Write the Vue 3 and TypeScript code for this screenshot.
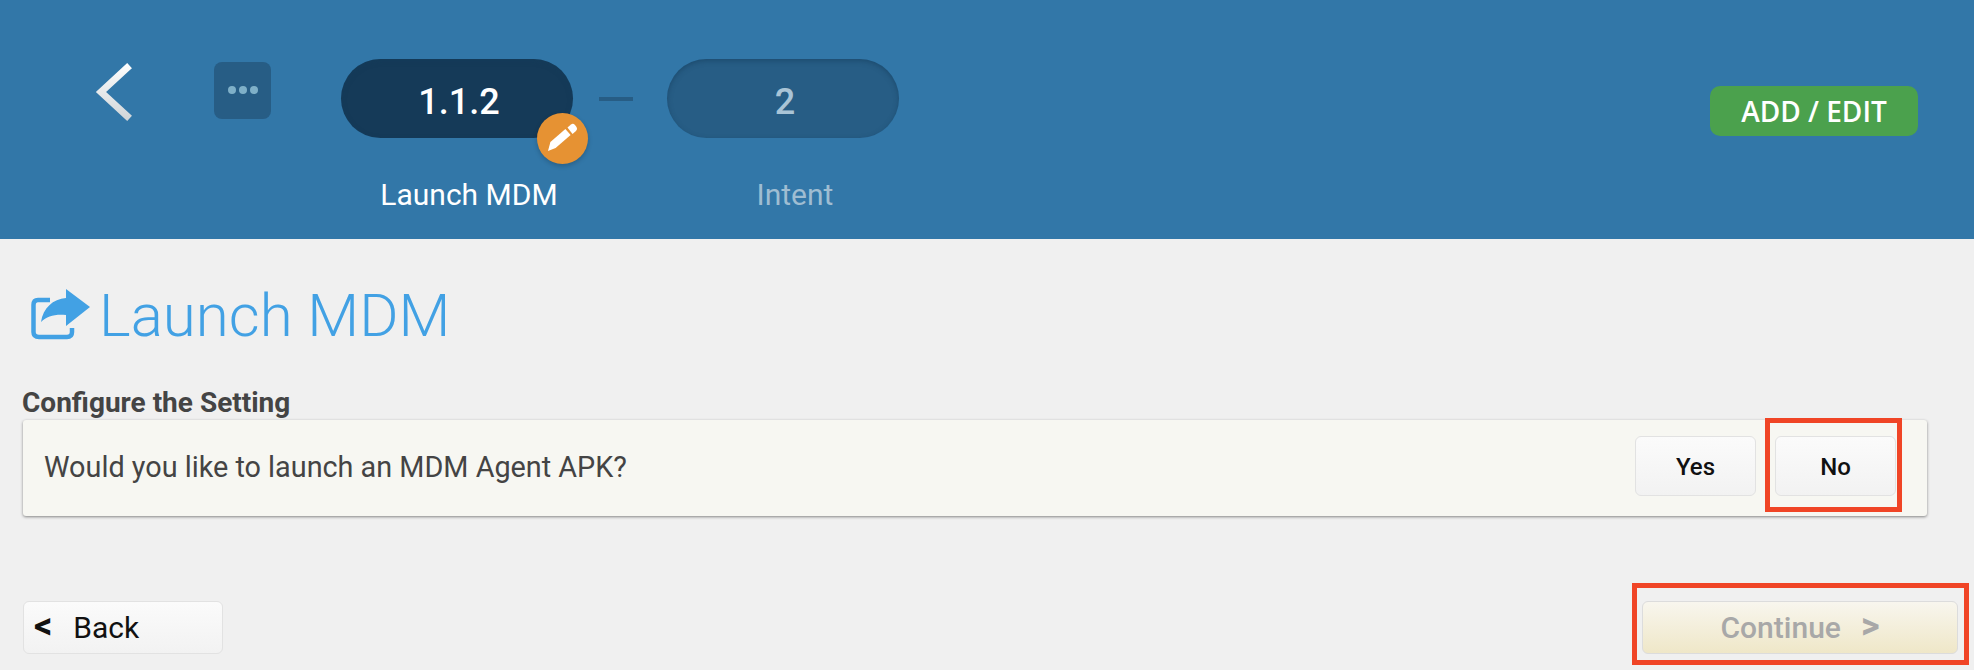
<template>
  <div class="page">
    <header class="topbar">
      <svg class="back-arrow" viewBox="0 0 38 60" width="38" height="60">
        <defs>
          <linearGradient id="chev" gradientUnits="userSpaceOnUse" x1="0" y1="0" x2="0" y2="60">
            <stop offset="0" stop-color="#ffffff" />
            <stop offset="1" stop-color="#cfd4d7" />
          </linearGradient>
        </defs>
        <path d="M32 6 L6 30 L32 54" fill="none" stroke="url(#chev)" stroke-width="7" stroke-linecap="square" />
      </svg>
      <div class="more">
        <span v-for="n in 3" :key="n" class="dot"></span>
      </div>
      <div class="steps">
        <div class="step active">
          <div class="pill">
            1.1.2
            <span class="edit-badge">
              <svg viewBox="0 0 51 51" width="51" height="51">
                <path fill="#fff" d="M11 38 L13.4 29 L28.4 16 L33.6 22 L18.6 35 Z" />
                <path fill="#fff" d="M30.5 14.5 L34 11.5 Q36 10 38 12 L39.5 14 Q41 16 39 18 L35.5 21 Z" />
              </svg>
            </span>
          </div>
          <div class="step-label">Launch MDM</div>
        </div>
        <div class="connector"></div>
        <div class="step">
          <div class="pill">2</div>
          <div class="step-label">Intent</div>
        </div>
      </div>
      <button class="add-edit">ADD / EDIT</button>
    </header>

    <main class="content">
      <h1 class="title">
        <svg class="title-icon" viewBox="0 0 75 60" width="75" height="60">
          <path
            d="M25 20 H13 Q8.5 20 8.5 25 V52 Q8.5 57 14 57 H42 Q47 57 47 52 V48"
            fill="none"
            stroke="#42a1e4"
            stroke-width="4.5"
          />
          <path fill="#42a1e4" d="M41 9 L65 27 L41 46 V35 C30 34 22 36 16 42 C18 28 28 19 41 18 Z" />
        </svg>
        Launch MDM
      </h1>

      <div class="section-label">Configure the Setting</div>
      <div class="question-card">
        <span class="question">Would you like to launch an MDM Agent APK?</span>
        <div class="answers">
          <button class="btn answer">Yes</button>
          <button class="btn answer marked">No</button>
        </div>
      </div>

      <div class="nav-row">
        <button class="btn back"><span class="caret">&lt;</span>Back</button>
        <button class="btn continue marked" disabled>
          Continue<span class="caret">&gt;</span>
        </button>
      </div>
    </main>
  </div>
</template>

<script setup lang="ts">
</script>

<style>
html,
body {
  background: #f0f0f0;
}
</style>

<style scoped>
.page {
  width: 1974px;
  height: 670px;
  overflow: hidden;
  background: #f0f0f0;
  font-family: Roboto, sans-serif;
}

.topbar {
  height: 239px;
  box-sizing: border-box;
  background: #3277a8;
  display: flex;
  align-items: flex-start;
  padding: 59px 56px 0 95px;
}

.back-arrow {
  margin-top: 3px;
}

.more {
  width: 57px;
  height: 57px;
  margin: 3px 70px 0 81px;
  background: #275d85;
  border-radius: 8px;
  display: flex;
  align-items: center;
  justify-content: center;
  gap: 3px;
  padding-bottom: 2px;
  box-sizing: border-box;
}

.dot {
  width: 8px;
  height: 8px;
  border-radius: 50%;
  background: #7fb0c8;
}

.steps {
  display: flex;
  align-items: flex-start;
}

.step {
  width: 232px;
  display: flex;
  flex-direction: column;
  align-items: center;
}

.pill {
  position: relative;
  box-sizing: border-box;
  width: 232px;
  height: 79px;
  padding: 6px 0 0 4px;
  border-radius: 40px;
  background: #275d85;
  box-shadow: inset 0 2px 5px rgba(20, 60, 90, 0.5);
  color: #a9c4d6;
  font-size: 36px;
  font-weight: 500;
  display: flex;
  align-items: center;
  justify-content: center;
}

.step.active .pill {
  background: #153a58;
  color: #fff;
}

.edit-badge {
  position: absolute;
  right: -15px;
  bottom: -26px;
  width: 51px;
  height: 51px;
  border-radius: 50%;
  background: #e69233;
  box-shadow: 0 2px 5px rgba(0, 0, 0, 0.2);
  display: flex;
}

.step-label {
  margin-top: 40px;
  margin-left: 24px;
  font-size: 30px;
  line-height: 34px;
  color: #9fbdd2;
}

.step.active .step-label {
  color: #fff;
}

.connector {
  width: 34px;
  height: 4px;
  margin: 38px 34px 0 26px;
  background: #275d85;
}

.add-edit {
  margin: 27px 0 0 auto;
  width: 208px;
  height: 50px;
  border: none;
  border-radius: 10px;
  background: #4ba14d;
  color: #fff;
  font-family: "Open Sans", sans-serif;
  font-size: 28px;
  font-weight: 600;
  padding: 0;
}

.content {
  padding: 34px 46px 0 23px;
}

.title {
  margin: 0 0 0 2px;
  height: 84px;
  display: flex;
  align-items: center;
  color: #42a1e4;
  font-size: 60px;
  font-weight: 300;
}

.title-icon {
  margin: 0 -1px 10px 0;
}

.section-label {
  margin: 29px 0 0 -1px;
  font-size: 28px;
  line-height: 34px;
  font-weight: 700;
  color: #444;
}

.question-card {
  height: 96px;
  box-sizing: border-box;
  margin-right: 1px;
  background: #f7f7f2;
  border-radius: 3px;
  box-shadow: 0 1px 3px rgba(0, 0, 0, 0.45);
  display: flex;
  align-items: center;
  justify-content: space-between;
  padding: 0 31px 4px 21px;
}

.question {
  padding-top: 2px;
  font-size: 28.8px;
  color: #444;
}

.answers {
  display: flex;
  gap: 19px;
}

.btn {
  box-sizing: border-box;
  border: 1.5px solid #e2e2e2;
  border-radius: 6px;
  background: linear-gradient(#fbfbfb, #f2f2f2);
  font-family: Roboto, sans-serif;
  font-weight: 500;
  color: #111;
  padding: 0;
}

.answer {
  width: 121px;
  height: 60px;
  padding-top: 2px;
  font-size: 24px;
}

.marked {
  position: relative;
}

.marked::after {
  content: "";
  position: absolute;
  border: 5px solid #f04526;
  pointer-events: none;
}

.answer.marked::after {
  inset: -19px -7px -17px -11px;
}

.nav-row {
  display: flex;
  justify-content: space-between;
  margin-top: 85px;
  margin-right: -30px;
}

.back {
  width: 200px;
  height: 53px;
  font-size: 30px;
  text-align: left;
  padding-left: 10px;
  font-weight: 400;
}

.caret {
  font-size: 36px;
  line-height: 30px;
  font-weight: 700;
}

.back .caret {
  margin-right: 21px;
}

.continue {
  width: 316px;
  height: 53px;
  font-size: 30px;
  background: linear-gradient(#f8f6ee, #efe7c8);
  border-color: #dcdcdc;
  color: #a8a8a8;
}

.continue .caret {
  margin-left: 20px;
}

.continue.marked::after {
  inset: -19px -12px -12px -11px;
}
</style>
